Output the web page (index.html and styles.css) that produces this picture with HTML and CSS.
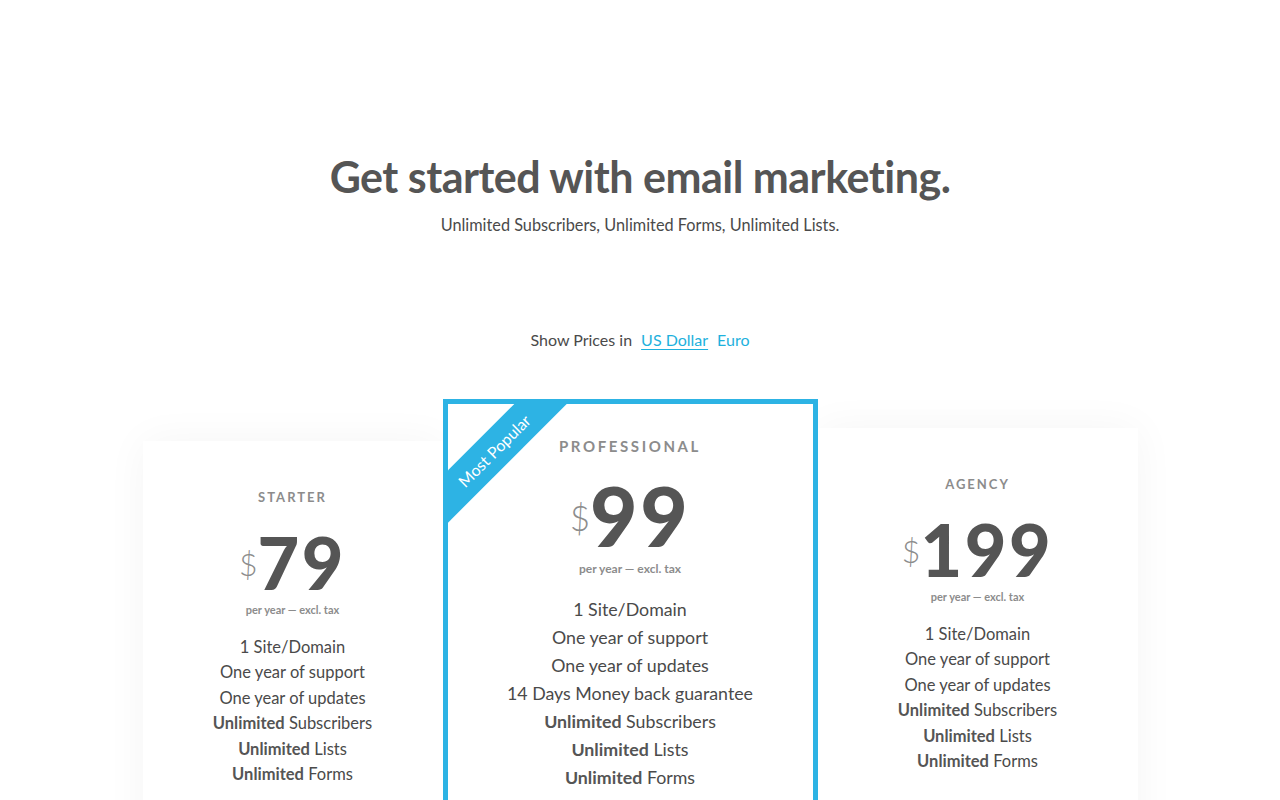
FILE: index.html
```html
<!DOCTYPE html>
<html lang="en">
<head>
<meta charset="utf-8">
<title>Pricing</title>
<link rel="stylesheet" href="styles.css">
</head>
<body>
<main class="page">
  <header class="intro">
    <h1 class="title">Get started with email marketing.</h1>
    <p class="subtitle">Unlimited Subscribers, Unlimited Forms, Unlimited Lists.</p>
  </header>

  <div class="currency">
    <span>Show Prices in</span>
    <a href="#" class="currency-link active">US Dollar</a>
    <a href="#" class="currency-link">Euro</a>
  </div>

  <section class="plans">
    <article class="plan plan-starter">
      <h2 class="plan-name">Starter</h2>
      <div class="price"><span class="currency-sign">$</span><span class="amount">79</span></div>
      <p class="period">per year — excl. tax</p>
      <ul class="features">
        <li>1 Site/Domain</li>
        <li>One year of support</li>
        <li>One year of updates</li>
        <li><b>Unlimited</b> Subscribers</li>
        <li><b>Unlimited</b> Lists</li>
        <li><b>Unlimited</b> Forms</li>
      </ul>
    </article>

    <article class="plan plan-pro">
      <div class="ribbon">Most Popular</div>
      <h2 class="plan-name">Professional</h2>
      <div class="price"><span class="currency-sign">$</span><span class="amount">99</span></div>
      <p class="period">per year — excl. tax</p>
      <ul class="features">
        <li>1 Site/Domain</li>
        <li>One year of support</li>
        <li>One year of updates</li>
        <li>14 Days Money back guarantee</li>
        <li><b>Unlimited</b> Subscribers</li>
        <li><b>Unlimited</b> Lists</li>
        <li><b>Unlimited</b> Forms</li>
      </ul>
    </article>

    <article class="plan plan-agency">
      <h2 class="plan-name">Agency</h2>
      <div class="price"><span class="currency-sign">$</span><span class="amount">199</span></div>
      <p class="period">per year — excl. tax</p>
      <ul class="features">
        <li>1 Site/Domain</li>
        <li>One year of support</li>
        <li>One year of updates</li>
        <li><b>Unlimited</b> Subscribers</li>
        <li><b>Unlimited</b> Lists</li>
        <li><b>Unlimited</b> Forms</li>
      </ul>
    </article>
  </section>
</main>
</body>
</html>
```

FILE: styles.css
```css
html, body {
  margin: 0;
  padding: 0;
  background: #ffffff;
  overflow: hidden;
}

body {
  font-family: "Lato", "Noto Sans", sans-serif;
  color: #4a4a4a;
}

.page {
  display: flex;
  flex-direction: column;
  align-items: center;
  padding-top: 150px;
}

.intro {
  text-align: center;
}

.title {
  margin: 0;
  font-size: 43px;
  line-height: 54px;
  font-weight: 700;
  color: #555555;
  letter-spacing: -0.5px;
}

.subtitle {
  margin: 9px 0 0;
  font-size: 16.3px;
  line-height: 24px;
  font-weight: 400;
  color: #4a4a4a;
}

.currency {
  margin-top: 91px;
  display: flex;
  gap: 9px;
  font-size: 16px;
  line-height: 24px;
  color: #4a4a4a;
}

.currency-link {
  color: #1eb1dd;
  text-decoration: none;
}

.currency-link.active {
  text-decoration: underline;
  text-underline-offset: 3px;
}

.plans {
  margin-top: 47px;
  display: flex;
  align-items: flex-start;
  justify-content: center;
}

.plan {
  position: relative;
  background: #ffffff;
  text-align: center;
  display: flex;
  flex-direction: column;
  align-items: center;
  box-shadow: 0 0 40px rgba(0, 0, 0, 0.045);
  padding: 48px 0 80px;
}

.plan-starter {
  width: 300px;
  margin-top: 42px;
}

.plan-agency {
  width: 320px;
  margin-top: 29px;
}

.plan-pro {
  width: 375px;
  box-sizing: border-box;
  border: 5px solid #2db3e4;
  padding-top: 33px;
  z-index: 2;
  overflow: hidden;
  box-shadow: none;
}

.plan-name {
  margin: 0;
  font-size: 13px;
  line-height: 16px;
  font-weight: 700;
  letter-spacing: 2px;
  text-transform: uppercase;
  color: #8c8c8c;
}

.price {
  margin-top: 21px;
  display: flex;
  align-items: center;
  color: #555555;
}

.currency-sign {
  font-size: 32px;
  line-height: 32px;
  font-weight: 300;
  color: #8c8c8c;
  margin-right: 0;
  margin-top: 4px;
}

.amount {
  font-size: 72px;
  line-height: 72px;
  font-weight: 900;
  letter-spacing: 2.5px;
}

.period {
  margin: 4px 0 0;
  font-size: 11px;
  line-height: 16px;
  font-weight: 700;
  color: #8c8c8c;
}

.features {
  list-style: none;
  margin: 17px 0 0;
  padding: 0;
  font-size: 16.5px;
  line-height: 25.4px;
  color: #4a4a4a;
}

.features b {
  font-weight: 700;
  color: #555555;
}

.plan-pro .plan-name {
  font-size: 15px;
  line-height: 18px;
  letter-spacing: 2.6px;
}

.plan-pro .price {
  margin-top: 19px;
}

.plan-pro .amount {
  font-size: 82px;
  line-height: 82px;
  letter-spacing: 2.5px;
}

.plan-pro .currency-sign {
  font-size: 35px;
  line-height: 35px;
}

.plan-pro .period {
  font-size: 12px;
  margin-top: 5px;
}

.plan-pro .features {
  font-size: 17.8px;
  line-height: 28px;
  margin-top: 18px;
}

.ribbon {
  position: absolute;
  left: -54px;
  top: 28px;
  width: 200px;
  height: 37px;
  line-height: 37px;
  background: #2db3e4;
  color: #ffffff;
  font-size: 16px;
  font-weight: 400;
  text-align: center;
  transform: rotate(-45deg);
}
```
